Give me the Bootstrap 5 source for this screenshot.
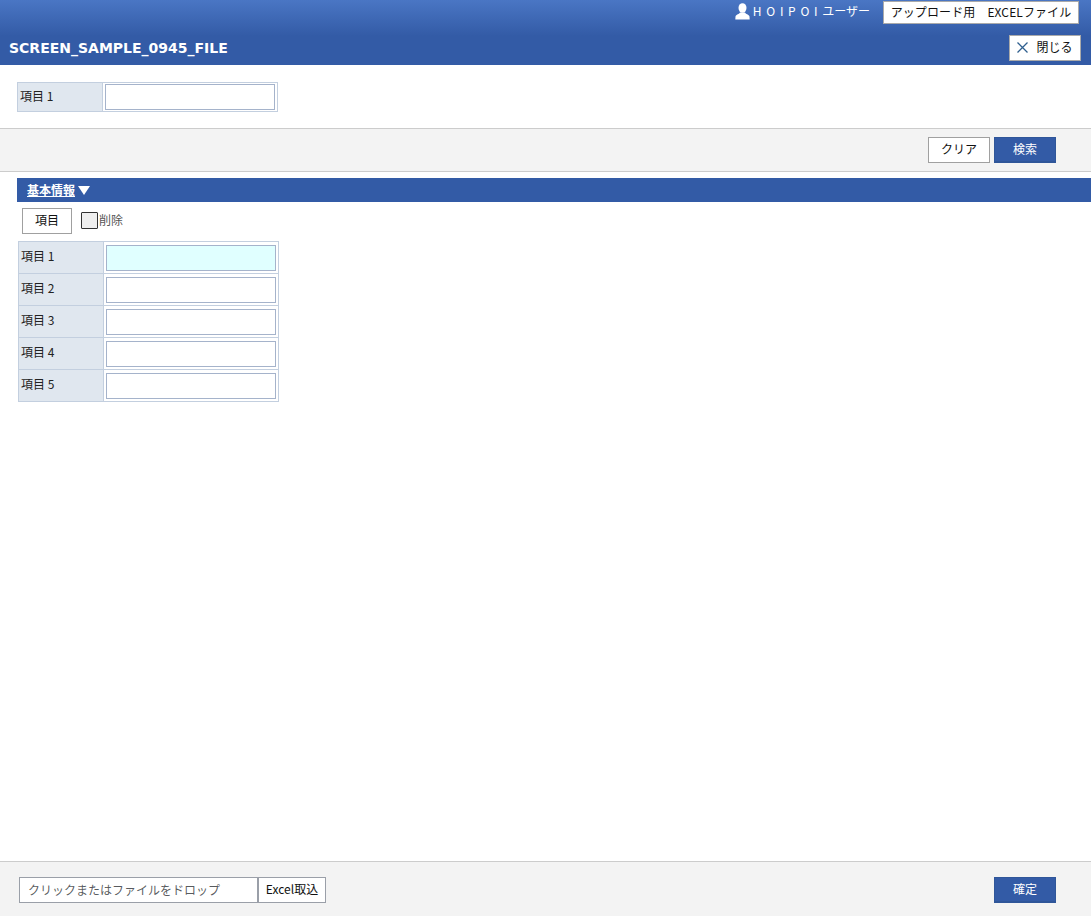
<!DOCTYPE html>
<html lang="ja">
<head>
  <meta charset="UTF-8">
  <title>SCREEN_SAMPLE_0945_FILE</title>
  <meta name="viewport" content="width=device-width, initial-scale=1.0">
  <link href="https://cdn.jsdelivr.net/npm/bootstrap@5.3.3/dist/css/bootstrap.min.css" rel="stylesheet" />
  <style>
    body { font-family: "Noto Sans CJK JP", sans-serif; font-size: 12px; color: #222; background: #fff; overflow: hidden; }
    .app-head { height: 65px; background: linear-gradient(#4a76c4 0, #335ba6 36px); color: #fff; }
    .head-top { height: 30px; padding-top: 1px; padding-right: 12px; }
    .user-name { margin-right: 13px; line-height: 20px; font-size: 12px; }
    .user-name svg { margin-right: 3px; vertical-align: -4px; }
    .user-spaced { letter-spacing: 4.7px; }
    .upload-btn { width: 196px; height: 23px; background: #fff; border: 1px solid #aaa; color: #111; font-size: 12px; line-height: 20px; text-align: center; white-space: pre; letter-spacing: .1px; }
    .head-bottom { height: 35px; padding: 0 10px 0 9px; }
    .screen-title { font-family: "DejaVu Sans", sans-serif; font-size: 14px; font-weight: 700; margin: 2px 0 0; }
    .close-btn { width: 72px; height: 26px; padding: 0 0 2px; border: 1px solid #aaa; border-radius: 0; background: #fff; color: #111; font-size: 12px; margin-top: 1px; }
    .close-btn svg { margin-right: 8px; vertical-align: -1px; }
    .cond-area { height: 63px; padding: 17px 0 0 17px; }
    .field-table { border-collapse: collapse; table-layout: fixed; }
    .field-table td { border: 1px solid #c3cfdf; padding: 0; height: 32px; vertical-align: middle; }
    .field-table .field-label { width: 85px; background: #e0e7ef; padding: 0 0 3px 2px; color: #222; }
    .field-table .field-input { width: 175px; padding: 0 2px; }
    .cond-area .field-table td { height: 29px; }
    .cond-area .text-box { margin-top: 0; }
    .text-box { display: block; width: 170px; height: 26px; padding: 0 4px; border: 1px solid #a5b3cb; border-radius: 0; background: #fff; font-size: 12px; }
    .text-box.required-box { background: #e0ffff; }
    .button-bar { height: 44px; background: #f3f3f3; border-top: 1px solid #ccc; border-bottom: 1px solid #ccc; padding-right: 35px; gap: 4px; }
    .plain-btn { width: 62px; height: 26px; padding: 0 0 2px; border: 1px solid #a0a0a0; border-radius: 0; background: #fff; color: #111; font-size: 12px; }
    .blue-btn { width: 62px; height: 26px; padding: 0 0 2px; border: 1px solid #2f5699; border-bottom-width: 2px; border-radius: 0; background: #335ba6; color: #fff; font-size: 12px; }
    .section-bar { height: 24px; margin: 6px 0 0 17px; padding-left: 10px; background: #335ba6; color: #fff; font-weight: 700; line-height: 23px; }
    .section-bar a { color: #fff; }
    .tri-down { display: inline-block; width: 0; height: 0; margin-left: 3px; border-left: 6px solid transparent; border-right: 6px solid transparent; border-top: 9px solid #fff; }
    .tool-row { height: 39px; padding: 6px 0 0 22px; }
    .tool-btn { width: 50px; }
    .del-check { width: 17px; height: 17px; margin-left: 9px; border: 1px solid #333; border-radius: 1px; background: #efefef; }
    .del-label { color: #555; margin-left: 1px; line-height: 16px; }
    .detail-table { margin-left: 18px; }
    .app-foot { height: 55px; background: #f3f3f3; border-top: 1px solid #ccc; padding: 15px 35px 0 19px; }
    .drop-box { width: 239px; height: 26px; padding: 0 8px 2px; border: 1px solid #9a9fa8; border-radius: 0; background: #fff; color: #666; font-size: 12px; }
    .import-btn { width: 68px; height: 26px; padding: 0 0 2px; border: 1px solid #9a9fa8; border-radius: 0; background: #fff; color: #111; font-size: 12px; }
  </style>
</head>
<body>
  <div class="d-flex flex-column vh-100">
    <header class="app-head">
      <div class="head-top d-flex justify-content-end">
        <span class="user-name">
          <svg width="15" height="17" viewBox="0 0 15 17" fill="#fff"><ellipse cx="7.5" cy="5" rx="4" ry="4.8"/><path d="M5 9.5 C4.5 11 1 11.5 .5 13.5 L.3 16.5 H14.7 L14.5 13.5 C14 11.5 10.5 11 10 9.5 Z"/></svg><span class="user-spaced">HOIPOI</span>ユーザー
        </span>
        <div class="upload-btn">アップロード用　EXCELファイル</div>
      </div>
      <div class="head-bottom d-flex justify-content-between align-items-center">
        <h1 class="screen-title">SCREEN_SAMPLE_0945_FILE</h1>
        <button class="btn close-btn">
          <svg width="11" height="11" viewBox="0 0 11 11" stroke="#2f5f8f" stroke-width="1.3" fill="none"><path d="M.5 .5 L10.5 10.5 M10.5 .5 L.5 10.5"/></svg>閉じる
        </button>
      </div>
    </header>

    <section class="cond-area">
      <table class="field-table">
        <tr>
          <td class="field-label">項目 1</td>
          <td class="field-input"><input class="form-control text-box" type="text"></td>
        </tr>
      </table>
    </section>

    <div class="button-bar d-flex justify-content-end align-items-center">
      <button class="btn plain-btn">クリア</button>
      <button class="btn blue-btn">検索</button>
    </div>

    <div class="section-bar"><a href="#">基本情報</a><span class="tri-down"></span></div>

    <div class="tool-row d-flex align-items-start">
      <button class="btn plain-btn tool-btn">項目</button>
      <span class="del-check mt-1"></span>
      <span class="del-label mt-1">削除</span>
    </div>

    <table class="field-table detail-table align-self-start">
      <tr><td class="field-label">項目 1</td><td class="field-input"><input class="form-control text-box required-box" type="text"></td></tr>
      <tr><td class="field-label">項目 2</td><td class="field-input"><input class="form-control text-box" type="text"></td></tr>
      <tr><td class="field-label">項目 3</td><td class="field-input"><input class="form-control text-box" type="text"></td></tr>
      <tr><td class="field-label">項目 4</td><td class="field-input"><input class="form-control text-box" type="text"></td></tr>
      <tr><td class="field-label">項目 5</td><td class="field-input"><input class="form-control text-box" type="text"></td></tr>
    </table>

    <footer class="app-foot mt-auto d-flex align-items-start">
      <input class="form-control drop-box" type="text" placeholder="クリックまたはファイルをドロップ">
      <button class="btn import-btn">Excel取込</button>
      <button class="btn blue-btn ms-auto">確定</button>
    </footer>
  </div>

  <script src="https://cdn.jsdelivr.net/npm/bootstrap@5.3.3/dist/js/bootstrap.bundle.min.js"></script>
</body>
</html>
